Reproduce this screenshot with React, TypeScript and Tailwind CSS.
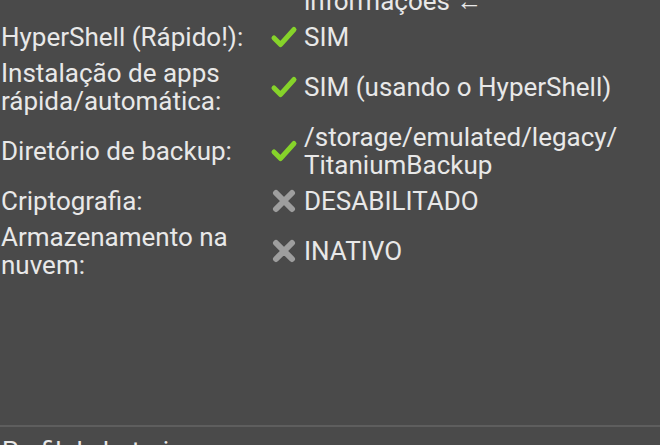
import React from "react";

const Check = () => (
  <svg width="28" height="24" viewBox="0 0 28 24" className="block">
    <path d="M4 13 L10.5 19.5 L24 4.5" fill="none" stroke="#86d32a" strokeWidth="5" strokeLinecap="round" strokeLinejoin="round" />
  </svg>
);

const Cross = () => (
  <svg width="28" height="24" viewBox="0 0 28 24" className="block">
    <path d="M6 4 L22 20 M22 4 L6 20" fill="none" stroke="#9e9e9e" strokeWidth="6" strokeLinecap="round" />
  </svg>
);

type Row = { label: string[]; value: string[]; ok: boolean | null };

const rows: Row[] = [
  { label: [""], value: ["informações ←"], ok: null },
  { label: ["HyperShell (Rápido!):"], value: ["SIM"], ok: true },
  { label: ["Instalação de apps", "rápida/automática:"], value: ["SIM (usando o HyperShell)"], ok: true },
  { label: ["Diretório de backup:"], value: ["/storage/emulated/legacy/", "TitaniumBackup"], ok: true },
  { label: ["Criptografia:"], value: ["DESABILITADO"], ok: false },
  { label: ["Armazenamento na", "nuvem:"], value: ["INATIVO"], ok: false },
];

export default function App() {
  return (
    <div
      className="w-[660px] h-[445px] overflow-hidden bg-[#4a4a4a] text-[#e8e8e8] flex flex-col"
      style={{ fontFamily: "Roboto, 'Noto Sans', sans-serif" }}
    >
      <div className="flex flex-col gap-[8px] -mt-[13px] text-[26px] leading-[28px]">
        {rows.map((r, i) => (
          <div key={i} className="flex items-center">
            <div className="w-[270px] pl-[1px] flex flex-col">
              {r.label.map((l, j) => (
                <span key={j} className="whitespace-nowrap">{l || "\u00a0"}</span>
              ))}
            </div>
            <div className="w-[34px] flex items-center">
              {r.ok === true && <Check />}
              {r.ok === false && <Cross />}
            </div>
            <div className="flex flex-col">
              {r.value.map((v, j) => (
                <span key={j} className="whitespace-nowrap">{v}</span>
              ))}
            </div>
          </div>
        ))}
      </div>
      <div className="flex-1" />
      <div className="h-[2px] bg-[#5e5e5e] mb-[10px] shrink-0" />
      <div className="h-[8px] shrink-0 overflow-visible text-[26px] leading-[28px] pl-[2px] whitespace-nowrap">Perfil de bateria</div>
    </div>
  );
}
